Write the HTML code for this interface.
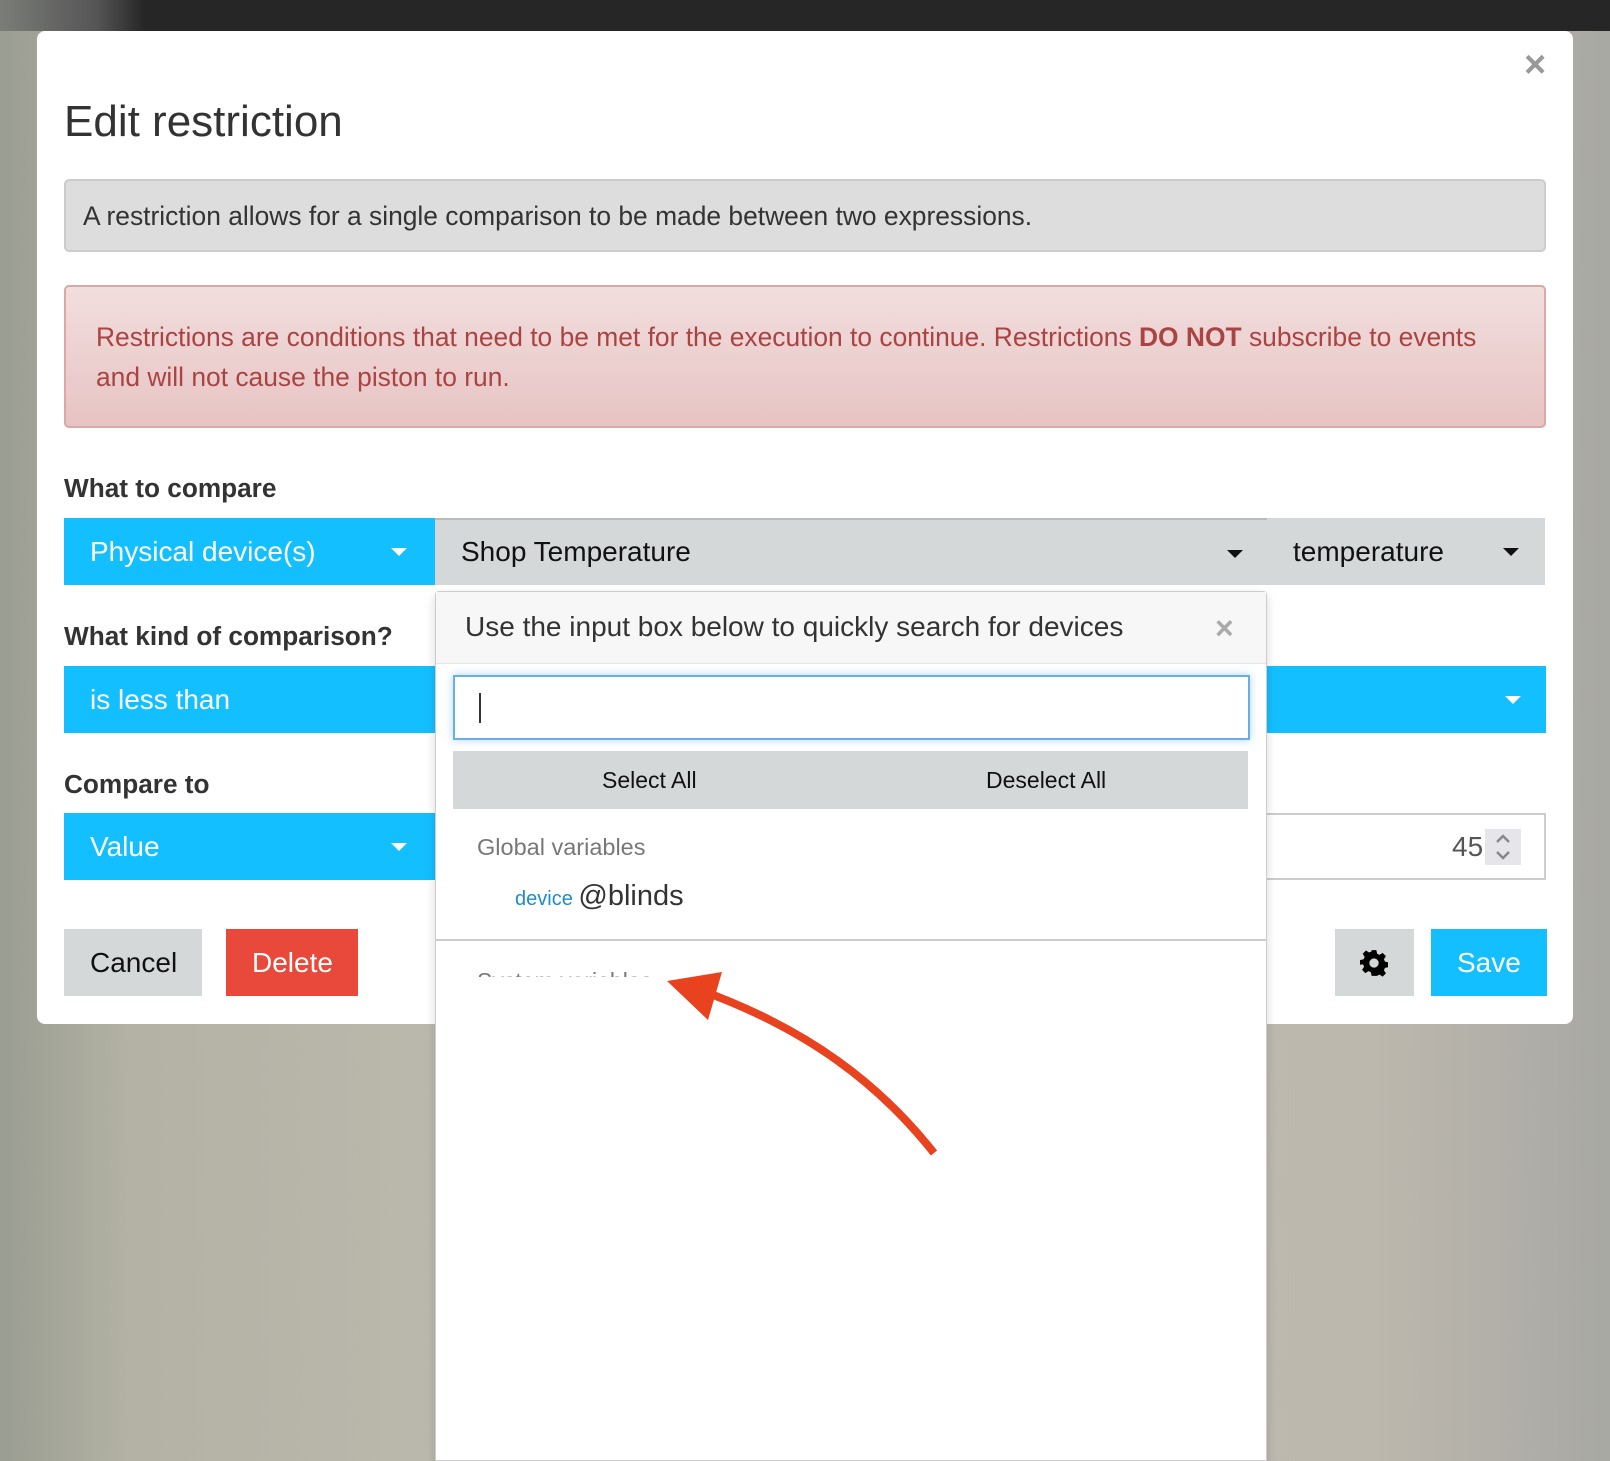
<!DOCTYPE html>
<html><head><meta charset="utf-8"><style>
*{box-sizing:border-box;margin:0;padding:0}
body{width:1610px;height:1450px;overflow:hidden;position:relative;font-family:"Liberation Sans",Arial,sans-serif;background:linear-gradient(90deg,#9a9d92 0,#b3b2a4 8%,#c0bcb2 40%,#bdb8ae 85%,#a8a8a4 100%)}
.top{position:absolute;left:0;top:0;width:1610px;height:31px;background:linear-gradient(90deg,#7a7d78 0,#555 6%,#262626 9%,#262626 100%)}
.modal{position:absolute;left:37px;top:31px;width:1536px;height:993px;background:#fff;border-radius:8px}
.abs{position:absolute}
h1{position:absolute;left:64px;top:97px;font-size:44px;font-weight:normal;color:#333}
.x{position:absolute;left:1524px;top:44px;font-size:38px;color:#999;font-weight:bold}
.info{left:64px;top:179px;width:1482px;height:73px;background:#ddd;border:2px solid #ccc;border-radius:5px;font-size:26.4px;color:#333;padding:20px 0 0 17px}
.alert{left:64px;top:285px;width:1482px;height:143px;background:linear-gradient(#f2dede,#e7c3c3);border:2px solid #dca7a7;border-radius:5px;font-size:26.4px;color:#a94442;padding:30px 0 0 30px;line-height:40px}
.lbl{font-size:26.2px;font-weight:bold;color:#333;left:64px}
.btn{position:absolute;font-size:28px;color:#fff;background:#14bfff;padding-left:26px;line-height:67px;height:67px}
.car{position:absolute;width:0;height:0;border-left:8px solid transparent;border-right:8px solid transparent;border-top:8px solid #fff;top:30px}
.gray{background:#d4d8d9;color:#111}
.gray .car{border-top-color:#111}
</style></head><body>
<div class="top"></div>
<div class="modal"></div>
<h1>Edit restriction</h1>
<div class="x">×</div>
<div class="abs info">A restriction allows for a single comparison to be made between two expressions.</div>
<div class="abs alert">Restrictions are conditions that need to be met for the execution to continue. Restrictions <b>DO NOT</b> subscribe to events<br>and will not cause the piston to run.</div>
<div class="abs lbl" style="top:473px">What to compare</div>
<div class="btn" style="left:64px;top:518px;width:371px">Physical device(s)<span class="car" style="left:327px"></span></div>
<div class="btn gray" style="left:435px;top:518px;width:832px;border-top:2px solid #bbb;line-height:64px">Shop Temperature<span class="car" style="left:792px"></span></div>
<div class="btn gray" style="left:1267px;top:518px;width:278px">temperature<span class="car" style="left:236px"></span></div>
<div class="abs lbl" style="top:621px">What kind of comparison?</div>
<div class="btn" style="left:64px;top:666px;width:1482px">is less than<span class="car" style="left:1441px"></span></div>
<div class="abs lbl" style="top:769px">Compare to</div>
<div class="btn" style="left:64px;top:813px;width:371px">Value<span class="car" style="left:327px"></span></div>
<div class="abs" style="left:435px;top:813px;width:1111px;height:67px;border:2px solid #ccc;background:#fff"></div>
<div class="abs" style="left:1452px;top:831px;font-size:28px;color:#555">45</div>
<div class="abs" style="left:1485px;top:829px;width:36px;height:36px;background:#e6e6ea">
<svg width="36" height="36" viewBox="0 0 36 36"><path d="M12 13 L18 7 L24 13 M12 23 L18 29 L24 23" stroke="#888" stroke-width="2.5" fill="none"/></svg></div>
<div class="btn gray" style="left:64px;top:929px;width:138px">Cancel</div>
<div class="btn" style="left:226px;top:929px;width:132px;background:#e8493a">Delete</div>
<div class="btn gray" style="left:1335px;top:929px;width:79px;padding:0">
<svg class="abs" style="left:25px;top:20px" width="28" height="28" viewBox="0 0 24 24"><path fill="#000" d="M10 1h4l.7 3.1 2 .9 2.7-1.7 2.8 2.8-1.7 2.7.9 2 3.1.7v4l-3.1.7-.9 2 1.7 2.7-2.8 2.8-2.7-1.7-2 .9L14 23h-4l-.7-3.1-2-.9-2.7 1.7-2.8-2.8 1.7-2.7-.9-2L0 13.5v-4l3.1-.7.9-2L2.3 4.1l2.8-2.8 2.7 1.7 2-.9z M12 8a4 4 0 1 0 0 8a4 4 0 1 0 0-8z" fill-rule="evenodd"/></svg></div>
<div class="btn" style="left:1431px;top:929px;width:116px">Save</div>
<!-- dropdown -->
<div class="abs" style="left:435px;top:591px;width:832px;height:870px;background:#fff;border:1px solid #ccc;border-radius:4px 4px 0 0;box-shadow:0 4px 10px rgba(0,0,0,.15)"></div>
<div class="abs" style="left:436px;top:592px;width:830px;height:72px;background:#f7f7f7;border-bottom:1px solid #e5e5e5;font-size:28px;color:#333;padding:19px 0 0 29px">Use the input box below to quickly search for devices</div>
<div class="abs" style="left:1215px;top:610px;font-size:32px;color:#aaa;font-weight:bold">×</div>
<div class="abs" style="left:453px;top:675px;width:797px;height:65px;border:2px solid #66afe9;box-shadow:0 0 8px rgba(102,175,233,.5);background:#fff"><div class="abs" style="left:24px;top:16px;width:2px;height:30px;background:#333"></div></div>
<div class="abs" style="left:453px;top:751px;width:795px;height:58px;background:#d4d8d9;font-size:23px;color:#111"><span class="abs" style="left:149px;top:16px">Select All</span><span class="abs" style="left:533px;top:16px">Deselect All</span></div>
<div class="abs" style="left:477px;top:834px;font-size:23.5px;color:#777">Global variables</div>
<div class="abs" style="left:515px;top:880px;font-size:20px;color:#1a8fc9">device <span style="font-size:29px;color:#333">@blinds</span></div>
<div class="abs" style="left:436px;top:939px;width:830px;height:2px;background:#ccc"></div>
<div class="abs" style="left:477px;top:972px;width:180px;height:5px;overflow:hidden;font-size:23px;color:#777"><div style="margin-top:-5px;line-height:28px">System variables</div></div>
<svg class="abs" style="left:0;top:0" width="1610" height="1450"><path d="M934 1153 C880 1085 810 1030 700 990" stroke="#e8421e" stroke-width="8" fill="none"/><path d="M667 981 L722 972 L708 1020 Z" fill="#e8421e"/></svg>
</body></html>
